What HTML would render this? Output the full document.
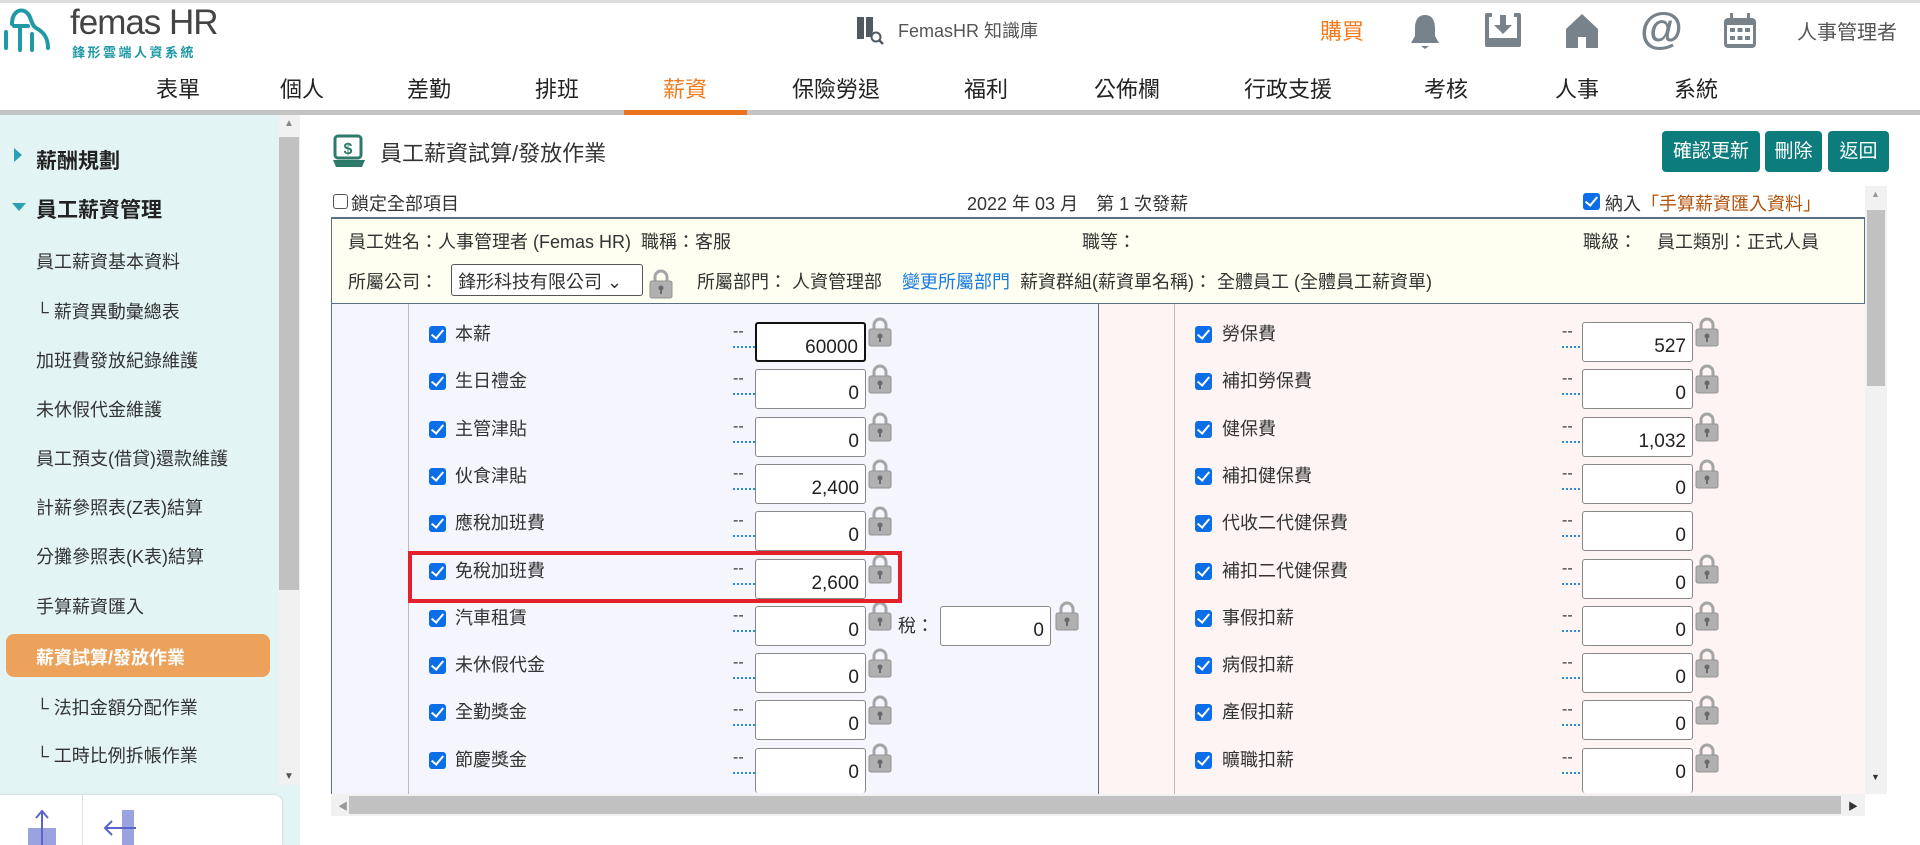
<!DOCTYPE html>
<html><head><meta charset="utf-8"><style>
*{box-sizing:border-box;margin:0;padding:0}
body{width:1920px;height:845px;overflow:hidden;background:#fff;font-family:"Liberation Sans","Noto Sans CJK TC",sans-serif;color:#333;position:relative}
.a{position:absolute;white-space:nowrap}
.nav{position:absolute;top:72px;font-size:22px;color:#222;transform:translateX(-50%)}
.side{position:absolute;left:36px;font-size:18px;color:#333}
.cb{position:absolute;width:17px;height:17px;background:#0b6ee8;border-radius:3px}
.cb:after{content:"";position:absolute;left:5px;top:1px;width:5px;height:10px;border:solid #fff;border-width:0 2.5px 2.5px 0;transform:rotate(40deg)}
.lbl{position:absolute;font-size:18px;color:#333;line-height:24px}
.dash{position:absolute;font-size:16px;color:#333;line-height:20px;width:22px}
.dash:after{content:"";position:absolute;left:0;top:24px;width:22px;border-top:2px dotted #2a8ad8}
.inp{position:absolute;width:111px;height:40px;background:#fff;border:1px solid #888;border-radius:3px;font-size:19px;text-align:right;padding:10px 6px 0 0;line-height:28px;color:#222}
.lock{position:absolute;width:26px;height:32px}
.ic{position:absolute;top:12px}
</style></head><body>
<div class="a" style="left:0;top:0;width:1920px;height:3px;background:#ddd"></div>
<svg class="a" style="left:2px;top:4px" width="50" height="52" viewBox="0 0 50 52"><path d="M4 44 V28 M10 20 C10 8 18 4 24 8 C30 12 28 20 34 24 C42 28 46 34 46 44 M18 22 V46 M12 22 H26 M30 30 V46" fill="none" stroke="#1f9aa5" stroke-width="4" stroke-linecap="round"/></svg>
<div class="a" style="left:70px;top:3px;font-size:35px;color:#444;letter-spacing:-1px">femas HR</div>
<div class="a" style="left:72px;top:42px;font-size:13px;font-weight:bold;color:#1f9aa5;letter-spacing:2.5px">鋒形雲端人資系統</div>
<svg class="a" style="left:855px;top:15px" width="30" height="30" viewBox="0 0 30 30"><path d="M2 2 H9 V24 H2Z M11 2 H18 V16 L16 22 H11Z" fill="#505a63"/><circle cx="21" cy="22" r="4.5" fill="none" stroke="#505a63" stroke-width="2"/><path d="M24 25 L28 29" stroke="#505a63" stroke-width="2.5"/></svg>
<div class="a" style="left:898px;top:17px;font-size:18px;color:#555">FemasHR 知識庫</div>
<div class="a" style="left:1320px;top:14px;font-size:22px;color:#f07a1c">購買</div>
<svg class="ic" style="left:1408px" width="34" height="40" viewBox="0 0 34 40"><path d="M17 3 C9 3 7 10 7 16 V24 L3 31 H31 L27 24 V16 C27 10 25 3 17 3Z" fill="#77828b"/><path d="M13 34 H21 L17 37Z" fill="#77828b"/></svg>
<svg class="ic" style="left:1484px" width="38" height="38" viewBox="0 0 38 38"><path d="M8 3 H3 V33 H35 V3 H30" fill="none" stroke="#77828b" stroke-width="4" stroke-linejoin="round"/><path d="M3 26 H35 V35 H3Z" fill="#77828b"/><path d="M16 3 H22 V13 H28 L19 22 L10 13 H16Z" fill="#77828b"/></svg>
<svg class="ic" style="left:1564px" width="36" height="38" viewBox="0 0 36 38"><path d="M18 2 L34 17 V36 H22 V25 H14 V36 H2 V17Z" fill="#77828b"/></svg>
<div class="a" style="left:1640px;top:4px;font-size:44px;font-weight:bold;color:#77828b">@</div>
<svg class="ic" style="left:1722px" width="36" height="38" viewBox="0 0 36 38"><rect x="2" y="6" width="32" height="30" rx="4" fill="#77828b"/><rect x="8" y="1" width="3" height="8" fill="#77828b"/><rect x="25" y="1" width="3" height="8" fill="#77828b"/><rect x="5" y="13" width="26" height="19" fill="#fff"/><g fill="#77828b"><rect x="8" y="16" width="5" height="4"/><rect x="15.5" y="16" width="5" height="4"/><rect x="23" y="16" width="5" height="4"/><rect x="8" y="24" width="5" height="4"/><rect x="15.5" y="24" width="5" height="4"/><rect x="23" y="24" width="5" height="4"/></g></svg>
<div class="a" style="left:1797px;top:16px;font-size:20px;color:#555">人事管理者</div>
<div class="nav" style="left:178px">表單</div><div class="nav" style="left:302px">個人</div><div class="nav" style="left:429px">差勤</div><div class="nav" style="left:557px">排班</div><div class="nav" style="left:685px;color:#ef7a1f">薪資</div><div class="nav" style="left:836px">保險勞退</div><div class="nav" style="left:986px">福利</div><div class="nav" style="left:1127px">公佈欄</div><div class="nav" style="left:1288px">行政支援</div><div class="nav" style="left:1446px">考核</div><div class="nav" style="left:1577px">人事</div><div class="nav" style="left:1696px">系統</div>
<div class="a" style="left:0;top:110px;width:1920px;height:5px;background:#c4c4c4"></div>
<div class="a" style="left:624px;top:110px;width:123px;height:5px;background:#ea7320"></div>
<div class="a" style="left:0;top:115px;width:300px;height:730px;background:#e3f4f4"></div>
<div class="a" style="left:279px;top:115px;width:20px;height:670px;background:#f1f1f1"></div>
<div class="a" style="left:279px;top:137px;width:20px;height:453px;background:#c1c1c1"></div>
<div class="a" style="left:284px;top:118px;font-size:10px;color:#888">▲</div>
<div class="a" style="left:284px;top:771px;font-size:10px;color:#555">▼</div>
<div class="a" style="left:14px;top:148px;width:0;height:0;border-left:8px solid #2aa0b5;border-top:7px solid transparent;border-bottom:7px solid transparent"></div>
<div class="a" style="left:36px;top:145px;font-size:21px;font-weight:bold;color:#222">薪酬規劃</div>
<div class="a" style="left:12px;top:203px;width:0;height:0;border-top:8px solid #2aa0b5;border-left:7px solid transparent;border-right:7px solid transparent"></div>
<div class="a" style="left:36px;top:194px;font-size:21px;font-weight:bold;color:#222">員工薪資管理</div>
<div class="side" style="top:248px">員工薪資基本資料</div>
<div class="side" style="top:298px">└ 薪資異動彙總表</div>
<div class="side" style="top:347px">加班費發放紀錄維護</div>
<div class="side" style="top:396px">未休假代金維護</div>
<div class="side" style="top:445px">員工預支(借貸)還款維護</div>
<div class="side" style="top:494px">計薪參照表(Z表)結算</div>
<div class="side" style="top:543px">分攤參照表(K表)結算</div>
<div class="side" style="top:593px">手算薪資匯入</div>
<div class="a" style="left:6px;top:634px;width:264px;height:43px;background:#eca25b;border-radius:8px"></div>
<div class="side" style="top:644px;color:#fff;font-weight:bold">薪資試算/發放作業</div>
<div class="side" style="top:694px">└ 法扣金額分配作業</div>
<div class="side" style="top:742px">└ 工時比例拆帳作業</div>
<div class="a" style="left:0;top:795px;width:282px;height:50px;background:#fff;border-radius:0 8px 0 0;box-shadow:0 0 3px rgba(0,0,0,.15)"></div>
<div class="a" style="left:82px;top:795px;width:1px;height:50px;background:#e2e2e2"></div>
<svg class="a" style="left:24px;top:808px" width="36" height="37" viewBox="0 0 36 37"><rect x="4" y="20" width="28" height="17" fill="#9aa2e0"/><path d="M18 37 V3 M12 10 L18 3 L24 10" stroke="#5b63c8" stroke-width="2" fill="none"/></svg>
<svg class="a" style="left:100px;top:808px" width="40" height="37" viewBox="0 0 40 37"><rect x="22" y="2" width="12" height="35" fill="#9aa2e0"/><path d="M36 20 H6 M12 13 L5 20 L12 27" stroke="#5b63c8" stroke-width="2" fill="none"/></svg>
<svg class="a" style="left:331px;top:134px" width="36" height="34" viewBox="0 0 36 34"><rect x="4" y="2" width="26" height="22" rx="3" fill="none" stroke="#2d7a6a" stroke-width="3"/><text x="17" y="20" font-size="16" font-weight="bold" fill="#2d7a6a" text-anchor="middle" font-family="Liberation Sans">$</text><path d="M2 26 H34 L31 33 H5Z" fill="#2d7a6a"/></svg>
<div class="a" style="left:380px;top:136px;font-size:22px;color:#333">員工薪資試算/發放作業</div>
<div class="a" style="left:1662px;top:131px;width:98px;height:41px;background:#0d7c7c;border-radius:4px;color:#fff;font-size:19px;text-align:center;line-height:41px">確認更新</div>
<div class="a" style="left:1765px;top:131px;width:57px;height:41px;background:#0d7c7c;border-radius:4px;color:#fff;font-size:19px;text-align:center;line-height:41px">刪除</div>
<div class="a" style="left:1828px;top:131px;width:61px;height:41px;background:#0d7c7c;border-radius:4px;color:#fff;font-size:19px;text-align:center;line-height:41px">返回</div>
<div class="a" style="left:333px;top:194px;width:15px;height:15px;border:1.5px solid #555;border-radius:3px"></div>
<div class="a" style="left:351px;top:190px;font-size:18px">鎖定全部項目</div>
<div class="a" style="left:967px;top:190px;font-size:18px">2022 年 03 月　第 1 次發薪</div>
<div class="cb" style="left:1583px;top:193px"></div>
<div class="a" style="left:1605px;top:190px;font-size:18px">納入<span style="color:#b0520c">「手算薪資匯入資料」</span></div>
<div class="a" style="left:1865px;top:186px;width:22px;height:608px;background:#f1f1f1"></div>
<div class="a" style="left:1867px;top:210px;width:18px;height:176px;background:#c1c1c1"></div>
<div class="a" style="left:1871px;top:189px;font-size:9px;color:#999">▲</div>
<div class="a" style="left:1871px;top:772px;font-size:9px;color:#333">▼</div>
<div class="a" style="left:331px;top:217px;width:1534px;height:88px;background:#fefff0;border-top:2px solid #5b6f85;border-bottom:2px solid #5b6f85;border-left:1px solid #5b6f85;border-right:1px solid #5b6f85"></div>
<div class="a" style="left:348px;top:228px;font-size:18px">員工姓名：人事管理者 (Femas HR)&nbsp; 職稱：客服</div>
<div class="a" style="left:1082px;top:228px;font-size:18px">職等：</div>
<div class="a" style="left:1583px;top:228px;font-size:18px">職級：&nbsp;&nbsp;&nbsp; 員工類別：正式人員</div>
<div class="a" style="left:348px;top:268px;font-size:18px">所屬公司：</div>
<div class="a" style="left:451px;top:264px;width:192px;height:32px;border:1px solid #555;border-radius:3px;background:#fff;font-size:18px;padding:3px 0 0 6px">鋒形科技有限公司 ⌄</div>
<div class="a" style="left:697px;top:268px;font-size:18px">所屬部門：&nbsp;人資管理部&nbsp;&nbsp;&nbsp; <span style="color:#1a7be0">變更所屬部門</span>&nbsp; 薪資群組(薪資單名稱)：&nbsp;全體員工 (全體員工薪資單)</div>
<div class="a" style="left:331px;top:304px;width:767px;height:490px;background:#f4f5fd;border-left:1px solid #5b6f85"></div>
<div class="a" style="left:1098px;top:304px;width:767px;height:490px;background:#fdf4f3;border-left:1px solid #5b6f85"></div>
<div class="a" style="left:408px;top:304px;width:1px;height:490px;background:#bbb"></div>
<div class="a" style="left:1174px;top:304px;width:1px;height:490px;background:#bbb"></div>
<div class="a" style="left:331px;top:794px;width:1534px;height:22px;background:#f1f1f1"></div>
<div class="a" style="left:349px;top:796px;width:1492px;height:18px;background:#c1c1c1"></div>
<div class="a" style="left:338px;top:798px;font-size:10px;color:#999">◀</div>
<div class="a" style="left:1848px;top:798px;font-size:10px;color:#333">▶</div>
<div class="cb" style="left:429px;top:326px"></div><div class="lbl" style="left:455px;top:322px">本薪</div><div class="dash" style="left:733px;top:322px">--</div><div class="inp" style="left:755px;top:322px;border:2px solid #111">60000</div>
<div class="cb" style="left:429px;top:373px"></div><div class="lbl" style="left:455px;top:369px">生日禮金</div><div class="dash" style="left:733px;top:369px">--</div><div class="inp" style="left:755px;top:369px">0</div>
<div class="cb" style="left:429px;top:421px"></div><div class="lbl" style="left:455px;top:417px">主管津貼</div><div class="dash" style="left:733px;top:417px">--</div><div class="inp" style="left:755px;top:417px">0</div>
<div class="cb" style="left:429px;top:468px"></div><div class="lbl" style="left:455px;top:464px">伙食津貼</div><div class="dash" style="left:733px;top:464px">--</div><div class="inp" style="left:755px;top:464px">2,400</div>
<div class="cb" style="left:429px;top:515px"></div><div class="lbl" style="left:455px;top:511px">應稅加班費</div><div class="dash" style="left:733px;top:511px">--</div><div class="inp" style="left:755px;top:511px">0</div>
<div class="cb" style="left:429px;top:563px"></div><div class="lbl" style="left:455px;top:559px">免稅加班費</div><div class="dash" style="left:733px;top:559px">--</div><div class="inp" style="left:755px;top:559px">2,600</div>
<div class="cb" style="left:429px;top:610px"></div><div class="lbl" style="left:455px;top:606px">汽車租賃</div><div class="dash" style="left:733px;top:606px">--</div><div class="inp" style="left:755px;top:606px">0</div>
<div class="lbl" style="left:898px;top:614px">稅：</div><div class="inp" style="left:940px;top:606px">0</div>
<div class="cb" style="left:429px;top:657px"></div><div class="lbl" style="left:455px;top:653px">未休假代金</div><div class="dash" style="left:733px;top:653px">--</div><div class="inp" style="left:755px;top:653px">0</div>
<div class="cb" style="left:429px;top:704px"></div><div class="lbl" style="left:455px;top:700px">全勤獎金</div><div class="dash" style="left:733px;top:700px">--</div><div class="inp" style="left:755px;top:700px">0</div>
<div class="cb" style="left:429px;top:752px"></div><div class="lbl" style="left:455px;top:748px">節慶獎金</div><div class="dash" style="left:733px;top:748px">--</div><div class="inp" style="left:755px;top:748px;height:45px;border-bottom:none">0</div>
<div class="cb" style="left:1195px;top:326px"></div><div class="lbl" style="left:1222px;top:322px">勞保費</div><div class="dash" style="left:1562px;top:322px">--</div><div class="inp" style="left:1582px;top:322px">527</div>
<div class="cb" style="left:1195px;top:373px"></div><div class="lbl" style="left:1222px;top:369px">補扣勞保費</div><div class="dash" style="left:1562px;top:369px">--</div><div class="inp" style="left:1582px;top:369px">0</div>
<div class="cb" style="left:1195px;top:421px"></div><div class="lbl" style="left:1222px;top:417px">健保費</div><div class="dash" style="left:1562px;top:417px">--</div><div class="inp" style="left:1582px;top:417px">1,032</div>
<div class="cb" style="left:1195px;top:468px"></div><div class="lbl" style="left:1222px;top:464px">補扣健保費</div><div class="dash" style="left:1562px;top:464px">--</div><div class="inp" style="left:1582px;top:464px">0</div>
<div class="cb" style="left:1195px;top:515px"></div><div class="lbl" style="left:1222px;top:511px">代收二代健保費</div><div class="dash" style="left:1562px;top:511px">--</div><div class="inp" style="left:1582px;top:511px">0</div>
<div class="cb" style="left:1195px;top:563px"></div><div class="lbl" style="left:1222px;top:559px">補扣二代健保費</div><div class="dash" style="left:1562px;top:559px">--</div><div class="inp" style="left:1582px;top:559px">0</div>
<div class="cb" style="left:1195px;top:610px"></div><div class="lbl" style="left:1222px;top:606px">事假扣薪</div><div class="dash" style="left:1562px;top:606px">--</div><div class="inp" style="left:1582px;top:606px">0</div>
<div class="cb" style="left:1195px;top:657px"></div><div class="lbl" style="left:1222px;top:653px">病假扣薪</div><div class="dash" style="left:1562px;top:653px">--</div><div class="inp" style="left:1582px;top:653px">0</div>
<div class="cb" style="left:1195px;top:704px"></div><div class="lbl" style="left:1222px;top:700px">產假扣薪</div><div class="dash" style="left:1562px;top:700px">--</div><div class="inp" style="left:1582px;top:700px">0</div>
<div class="cb" style="left:1195px;top:752px"></div><div class="lbl" style="left:1222px;top:748px">曠職扣薪</div><div class="dash" style="left:1562px;top:748px">--</div><div class="inp" style="left:1582px;top:748px;height:45px;border-bottom:none">0</div>
<svg width="0" height="0" style="position:absolute"><defs><g id="lk"><path d="M7 14 V9 A6 6 0 0 1 19 9 V14" fill="none" stroke="#a5a5a5" stroke-width="3"/><rect x="2" y="13" width="22" height="17" rx="2" fill="#b0b0b0" stroke="#949494"/><circle cx="13" cy="20" r="2.5" fill="#6a6a6a"/><rect x="12" y="21" width="2" height="5" fill="#6a6a6a"/></g></defs></svg>
<svg class="lock" style="left:867px;top:316px"><use href="#lk"/></svg>
<svg class="lock" style="left:867px;top:363px"><use href="#lk"/></svg>
<svg class="lock" style="left:867px;top:411px"><use href="#lk"/></svg>
<svg class="lock" style="left:867px;top:458px"><use href="#lk"/></svg>
<svg class="lock" style="left:867px;top:505px"><use href="#lk"/></svg>
<svg class="lock" style="left:867px;top:553px"><use href="#lk"/></svg>
<svg class="lock" style="left:867px;top:600px"><use href="#lk"/></svg>
<svg class="lock" style="left:1054px;top:600px"><use href="#lk"/></svg>
<svg class="lock" style="left:867px;top:647px"><use href="#lk"/></svg>
<svg class="lock" style="left:867px;top:694px"><use href="#lk"/></svg>
<svg class="lock" style="left:867px;top:742px"><use href="#lk"/></svg>
<svg class="lock" style="left:1694px;top:316px"><use href="#lk"/></svg>
<svg class="lock" style="left:1694px;top:363px"><use href="#lk"/></svg>
<svg class="lock" style="left:1694px;top:411px"><use href="#lk"/></svg>
<svg class="lock" style="left:1694px;top:458px"><use href="#lk"/></svg>
<svg class="lock" style="left:1694px;top:553px"><use href="#lk"/></svg>
<svg class="lock" style="left:1694px;top:600px"><use href="#lk"/></svg>
<svg class="lock" style="left:1694px;top:647px"><use href="#lk"/></svg>
<svg class="lock" style="left:1694px;top:694px"><use href="#lk"/></svg>
<svg class="lock" style="left:1694px;top:742px"><use href="#lk"/></svg>
<svg class="lock" style="left:648px;top:268px"><use href="#lk"/></svg>
<div class="a" style="left:408px;top:551px;width:494px;height:52px;border:4px solid #e4202a"></div>
</body></html>
